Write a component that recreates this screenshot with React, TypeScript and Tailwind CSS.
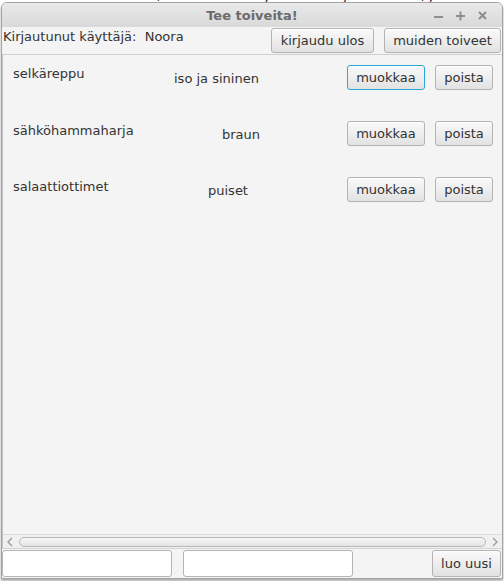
import React from "react";

const btn =
  "h-[25px] rounded-[3px] border border-[#b3b3b3] bg-gradient-to-b from-[#fafafa] to-[#e2e2e2] text-[13px] text-[#333] leading-none flex items-center justify-center shadow-[inset_0_1px_0_#ffffff]";

function Btn({ label, w, focused }: { label: string; w: string; focused?: boolean }) {
  return (
    <div
      className={
        btn +
        " " +
        w +
        (focused ? " !border-[#2aa7d8] shadow-[inset_0_0_0_1px_#bfe3f2]" : "")
      }
    >
      {label}
    </div>
  );
}

const rows = [
  { name: "selkäreppu", nameMt: "mt-[1px]", desc: "iso ja sininen", descPl: "pl-[86px]", focused: true },
  { name: "sähköhammaharja", nameMt: "mt-[2px]", desc: "braun", descPl: "pl-[134px]", focused: false },
  { name: "salaattiottimet", nameMt: "mt-[2px]", desc: "puiset", descPl: "pl-[120px]", focused: false },
];

export default function App() {
  return (
    <div className="w-[504px] h-[581px] bg-white overflow-hidden font-['DejaVu_Sans',sans-serif] text-[#333]">
      <div className="h-[2px] overflow-hidden pl-[36px]">
        <div className="-mt-[10px] font-['DejaVu_Sans_Mono',monospace] text-[13px] leading-[12px] text-[#222] whitespace-pre">
          {"contentPane.add(addItemButton, BorderLayout.SOUTH);"}
        </div>
      </div>
      <div className="ml-[1px] w-[502px] h-[577px] rounded-t-[6px] border border-[#a3a3a3] bg-[#f4f4f4] flex flex-col shadow-[0_2px_3px_rgba(0,0,0,0.35)]">
        {/* title bar */}
        <div className="relative h-[24px] shrink-0 rounded-t-[5px] bg-gradient-to-b from-[#e9e9e9] to-[#d9d9d9] flex items-center justify-center">
          <span className="text-[13px] font-bold text-[#6b6b6b] leading-none">Tee toiveita!</span>
          <div className="absolute right-[14px] top-0 h-full flex items-center gap-[11px]">
            <svg width="11" height="11" viewBox="0 0 11 11">
              <rect x="1" y="6" width="9" height="2" fill="#8e8e8e" />
            </svg>
            <svg width="11" height="11" viewBox="0 0 11 11">
              <rect x="1" y="5" width="9" height="2" fill="#8e8e8e" />
              <rect x="4.5" y="1.5" width="2" height="9" fill="#8e8e8e" />
            </svg>
            <svg width="11" height="11" viewBox="0 0 11 11">
              <path d="M2 2 L9 9 M9 2 L2 9" stroke="#8e8e8e" strokeWidth="2" />
            </svg>
          </div>
        </div>
        {/* header row */}
        <div className="h-[27px] shrink-0 flex items-start">
          <span className="pl-[1px] mt-[2px] text-[13px] leading-[16px] whitespace-pre">Kirjautunut käyttäjä:  Noora</span>
          <div className="ml-auto mt-[1px] mr-[1px] flex gap-[10px]">
            <Btn label="kirjaudu ulos" w="w-[103px]" />
            <Btn label="muiden toiveet" w="w-[117px]" />
          </div>
        </div>
        {/* list area */}
        <div className="flex-1 flex flex-col border-t border-[#cfcfcf] border-l border-l-[#c4c4c4] bg-[#f4f4f4]">
          <div className="flex-1 pt-[10px] flex flex-col gap-[31px]">
            {rows.map((r) => (
              <div key={r.name} className="h-[25px] flex items-start">
                <span className={"w-[85px] pl-[10px] text-[13px] leading-[16px] whitespace-nowrap " + r.nameMt}>
                  {r.name}
                </span>
                <span className={"mt-[6px] text-[13px] leading-[16px] whitespace-nowrap " + r.descPl}>{r.desc}</span>
                <div className="ml-auto mr-[9px] flex gap-[10px]">
                  <Btn label="muokkaa" w="w-[78px]" focused={r.focused} />
                  <Btn label="poista" w="w-[58px]" />
                </div>
              </div>
            ))}
          </div>
          {/* horizontal scrollbar */}
          <div className="h-[14px] shrink-0 flex items-center border-t border-[#dcdcdc] bg-[#f0f0f0]">
            <svg width="16" height="12" viewBox="0 0 16 12" className="shrink-0">
              <path d="M9 2 L5 6 L9 10" stroke="#9a9a9a" strokeWidth="1.3" fill="none" />
            </svg>
            <div className="flex-1 h-[10px] rounded-[5px] border border-[#b8b8b8] bg-gradient-to-b from-[#f6f6f6] to-[#e4e4e4]" />
            <svg width="16" height="12" viewBox="0 0 16 12" className="shrink-0">
              <path d="M7 2 L11 6 L7 10" stroke="#9a9a9a" strokeWidth="1.3" fill="none" />
            </svg>
          </div>
        </div>
        {/* bottom row */}
        <div className="h-[30px] shrink-0 flex items-start pt-[1px] border-t border-[#d4d4d4]">
          <div className="w-[170px] h-[27px] rounded-[3px] border border-[#b4b4b4] bg-white" />
          <div className="ml-[11px] w-[170px] h-[27px] rounded-[3px] border border-[#b4b4b4] bg-white" />
          <div className="ml-auto mr-[1px]">
            <div className={btn + " w-[69px] !h-[27px]"}>luo uusi</div>
          </div>
        </div>
      </div>
    </div>
  );
}
